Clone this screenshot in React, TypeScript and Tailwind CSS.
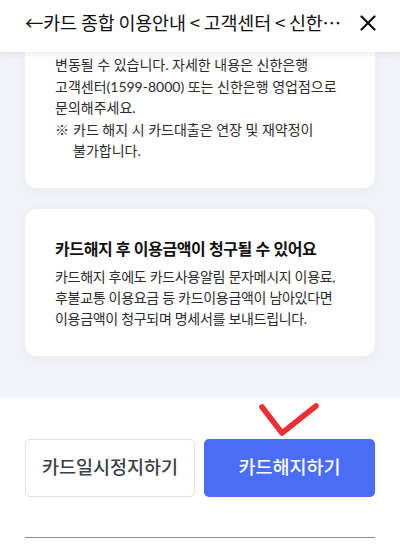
const font = { fontFamily: 'Lato, "Noto Sans CJK KR", sans-serif' };

export default function App() {
  return (
    <div className="w-[400px] h-[544px] overflow-hidden bg-white flex flex-col relative" style={font}>
      {/* header */}
      <div className="h-[52px] bg-white flex items-center pl-[25px] pr-[24px] shadow-[0_2px_6px_rgba(0,0,0,0.08)] relative z-10 shrink-0">
        <div className="flex-1 text-[18.5px] text-[#111] whitespace-nowrap tracking-[-0.2px] leading-none -mt-[7px]" style={{ fontFamily: '"Noto Sans CJK KR", sans-serif' }}>
          ←카드 종합 이용안내 &lt; 고객센터 &lt; 신한⋯
        </div>
        <svg width="16" height="16" viewBox="0 0 16 16" className="-mt-[7px]">
          <path d="M1.5 1.5 L14.5 14.5 M14.5 1.5 L1.5 14.5" stroke="#111" strokeWidth="2.2" strokeLinecap="round" />
        </svg>
      </div>

      {/* content */}
      <div className="bg-[#f1f3f8] px-[25px] pb-[42px] flex flex-col gap-[21px] shrink-0">
        <div className="bg-white rounded-b-xl shadow-[0_2px_10px_rgba(30,40,80,0.05)] px-[30px] pt-[2px] pb-[26px] text-[14px] leading-[21.5px] text-[#2b2b2b]">
          <p>변동될 수 있습니다. 자세한 내용은 신한은행</p>
          <p>고객센터(1599-8000) 또는 신한은행 영업점으로</p>
          <p>문의해주세요.</p>
          <div className="flex">
            <span className="w-[18px] shrink-0">※</span>
            <span>
              카드 해지 시 카드대출은 연장 및 재약정이
              <br />
              불가합니다.
            </span>
          </div>
        </div>

        <div className="bg-white rounded-xl shadow-[0_2px_10px_rgba(30,40,80,0.05)] px-[30px] pt-[28px] pb-[27px]">
          <h3 className="text-[16px] font-semibold leading-[24px] text-[#111] tracking-[-0.4px]">
            카드해지 후 이용금액이 청구될 수 있어요
          </h3>
          <div className="mt-[5px] text-[14px] leading-[21px] text-[#2b2b2b] tracking-[-0.3px]">
            <p>카드해지 후에도 카드사용알림 문자메시지 이용료,</p>
            <p>후불교통 이용요금 등 카드이용금액이 남아있다면</p>
            <p>이용금액이 청구되며 명세서를 보내드립니다.</p>
          </div>
        </div>
      </div>

      {/* bottom buttons */}
      <div className="flex-1 bg-white px-[25px] pt-[41px] relative">
        <div className="flex gap-[9px]">
          <button className="w-[170px] h-[58px] rounded-[5px] border border-[#dfe1e5] bg-white text-[18.5px] text-[#3a3f4a] font-medium">
            카드일시정지하기
          </button>
          <button className="flex-1 h-[58px] rounded-[5px] bg-[#4a6df5] text-[18.5px] text-white font-medium">
            카드해지하기
          </button>
        </div>
        <div className="mt-[40px] h-px bg-[#888]" />

        <svg className="absolute left-0 top-0 pointer-events-none" width="400" height="147" viewBox="0 0 400 147">
          <path d="M262 9 L282 35 L316 8" fill="none" stroke="#ec2f33" strokeWidth="5.5" strokeLinecap="round" strokeLinejoin="round" />
        </svg>
      </div>
    </div>
  );
}
